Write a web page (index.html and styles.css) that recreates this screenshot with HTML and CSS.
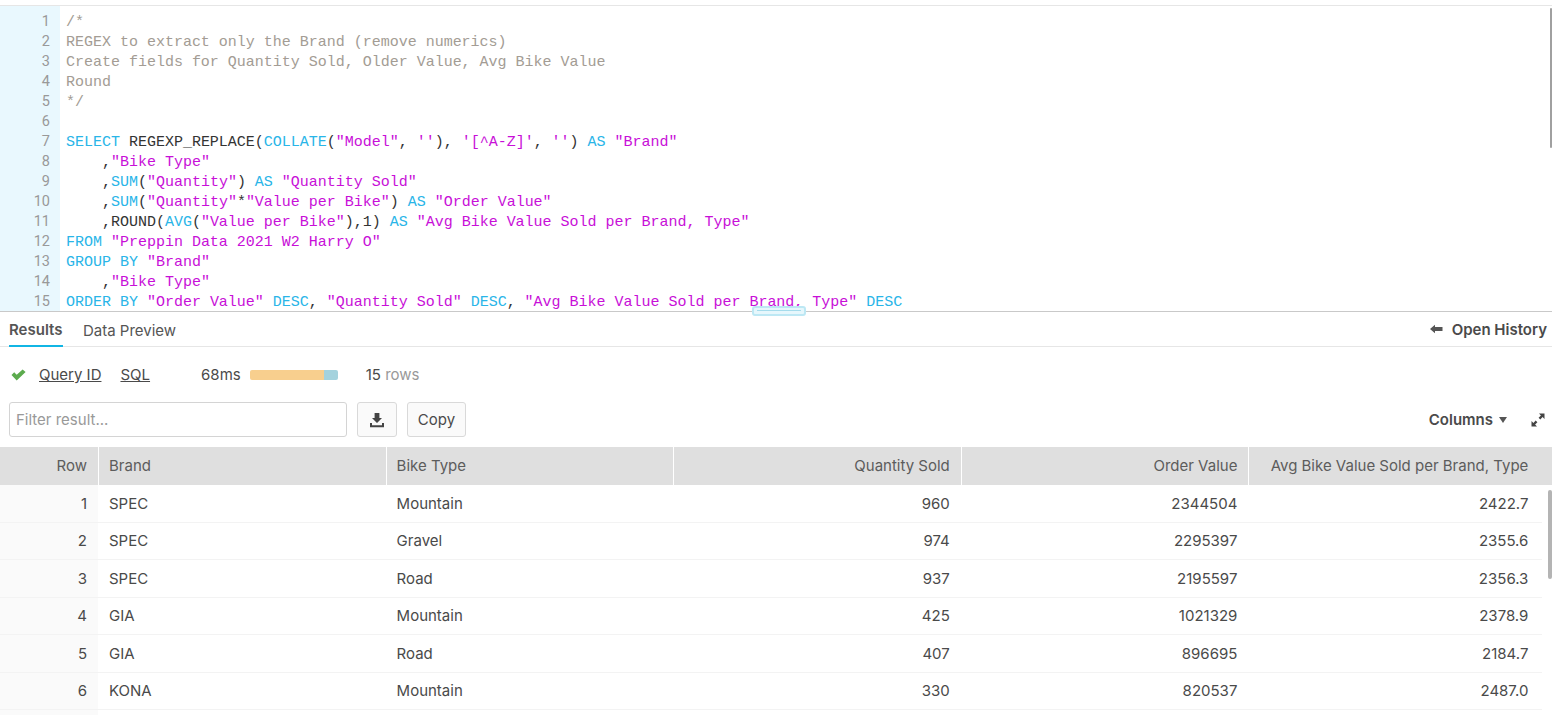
FILE: index.html
```html
<!DOCTYPE html>
<html lang="en">
<head>
<meta charset="utf-8">
<title>Worksheet</title>
<link rel="stylesheet" href="styles.css">
</head>
<body>
<div class="app">
  <section class="editor">
    <div class="gutter">
      <span>1</span><span>2</span><span>3</span><span>4</span><span>5</span><span>6</span><span>7</span><span>8</span><span>9</span><span>10</span><span>11</span><span>12</span><span>13</span><span>14</span><span>15</span>
    </div>
    <pre class="code"><span class="c">/*
REGEX to extract only the Brand (remove numerics)
Create fields for Quantity Sold, Older Value, Avg Bike Value
Round
*/</span>

<span class="k">SELECT</span> REGEXP_REPLACE(<span class="k">COLLATE</span>(<span class="s">"Model"</span>, <span class="s">''</span>), <span class="s">'[^A-Z]'</span>, <span class="s">''</span>) <span class="k">AS</span> <span class="s">"Brand"</span>
    ,<span class="s">"Bike Type"</span>
    ,<span class="k">SUM</span>(<span class="s">"Quantity"</span>) <span class="k">AS</span> <span class="s">"Quantity Sold"</span>
    ,<span class="k">SUM</span>(<span class="s">"Quantity"</span>*<span class="s">"Value per Bike"</span>) <span class="k">AS</span> <span class="s">"Order Value"</span>
    ,ROUND(<span class="k">AVG</span>(<span class="s">"Value per Bike"</span>),1) <span class="k">AS</span> <span class="s">"Avg Bike Value Sold per Brand, Type"</span>
<span class="k">FROM</span> <span class="s">"Preppin Data 2021 W2 Harry O"</span>
<span class="k">GROUP BY</span> <span class="s">"Brand"</span>
    ,<span class="s">"Bike Type"</span>
<span class="k">ORDER BY</span> <span class="s">"Order Value"</span> <span class="k">DESC</span>, <span class="s">"Quantity Sold"</span> <span class="k">DESC</span>, <span class="s">"Avg Bike Value Sold per Brand, Type"</span> <span class="k">DESC</span></pre>
    <div class="scroll scroll-editor"></div>
    <div class="handle"></div>
  </section>

  <nav class="tabs">
    <a class="tab active">Results</a>
    <a class="tab">Data Preview</a>
    <a class="history">
      <svg width="13" height="10" viewBox="0 0 13 10"><path d="M0 5 L5 .8 V3 H12.5 V7 H5 V9.2 Z" fill="#555"/></svg>
      Open History
    </a>
  </nav>

  <div class="status">
    <svg class="check" width="15" height="12" viewBox="0 0 15 12"><path d="M0.5 6 L3.2 3.2 L5.7 5.7 L11.6 0.4 L14.6 3 L5.7 11.4 Z" fill="#5cab4e"/></svg>
    <a class="link">Query ID</a>
    <a class="link sql">SQL</a>
    <span class="time">68ms</span>
    <div class="bar"><i class="bar-a"></i><i class="bar-b"></i></div>
    <span class="rows">15 <em>rows</em></span>
  </div>

  <div class="toolbar">
    <input class="filter" type="text" placeholder="Filter result...">
    <button class="btn icon-btn">
      <svg width="16" height="16" viewBox="0 0 16 16"><path d="M5.6 1 H10.4 V6 H13 L8 11 L3 6 H5.6 Z M1 11 H3 V13.2 H13 V11 H15 V15.2 H1 Z" fill="#444"/></svg>
    </button>
    <button class="btn copy">Copy</button>
    <div class="spacer"></div>
    <a class="columns">Columns <svg width="8" height="6" viewBox="0 0 8 6"><path d="M0 0 H8 L4 6 Z" fill="#555"/></svg></a>
    <svg class="expand" width="14" height="14" viewBox="0 0 14 14"><path d="M8 0.5 H13.5 V6 L11.6 4.1 L9.3 6.4 L7.6 4.7 L9.9 2.4 Z M6 13.5 H0.5 V8 L2.4 9.9 L4.7 7.6 L6.4 9.3 L4.1 11.6 Z" fill="#444"/></svg>
  </div>

  <section class="table">
    <div class="row head">
      <div class="cell num idx">Row</div><div class="cell">Brand</div><div class="cell">Bike Type</div><div class="cell num">Quantity Sold</div><div class="cell num">Order Value</div><div class="cell num">Avg Bike Value Sold per Brand, Type</div>
    </div>
    <div class="row"><div class="cell num idx">1</div><div class="cell">SPEC</div><div class="cell">Mountain</div><div class="cell num">960</div><div class="cell num">2344504</div><div class="cell num">2422.7</div></div>
    <div class="row"><div class="cell num idx">2</div><div class="cell">SPEC</div><div class="cell">Gravel</div><div class="cell num">974</div><div class="cell num">2295397</div><div class="cell num">2355.6</div></div>
    <div class="row"><div class="cell num idx">3</div><div class="cell">SPEC</div><div class="cell">Road</div><div class="cell num">937</div><div class="cell num">2195597</div><div class="cell num">2356.3</div></div>
    <div class="row"><div class="cell num idx">4</div><div class="cell">GIA</div><div class="cell">Mountain</div><div class="cell num">425</div><div class="cell num">1021329</div><div class="cell num">2378.9</div></div>
    <div class="row"><div class="cell num idx">5</div><div class="cell">GIA</div><div class="cell">Road</div><div class="cell num">407</div><div class="cell num">896695</div><div class="cell num">2184.7</div></div>
    <div class="row"><div class="cell num idx">6</div><div class="cell">KONA</div><div class="cell">Mountain</div><div class="cell num">330</div><div class="cell num">820537</div><div class="cell num">2487.0</div></div>
    <div class="row"><div class="cell num idx"></div><div class="cell"></div><div class="cell"></div><div class="cell num"></div><div class="cell num"></div><div class="cell num"></div></div>
    <div class="scroll scroll-table"></div>
  </section>
</div>
</body>
</html>
```
FILE: styles.css
```css
* { box-sizing: border-box; }
html, body { margin: 0; height: 715px; overflow: hidden; background: #fff; }
body { font-family: Inter, "Liberation Sans", sans-serif; font-size: 15px; color: #4a4a4a; }
.app { display: flex; flex-direction: column; height: 715px; overflow: hidden; }

.editor { position: relative; display: flex; flex: none; height: 307px; margin-top: 5px; border-top: 1px solid #e6e6e6; border-bottom: 1px solid #c9c9c9; }
.gutter { flex: none; width: 60px; padding: 6px 10px 0 0; background: #e9f8fe; display: flex; flex-direction: column; align-items: flex-end; font-family: Roboto, sans-serif; font-size: 14.5px; line-height: 20px; color: #999; overflow: hidden; }
.gutter span { height: 20px; flex: none; }
.code { margin: 0; padding: 7px 0 0 6px; font-family: "Liberation Mono", monospace; font-size: 15px; letter-spacing: -0.01px; line-height: 20px; color: #333; overflow: hidden; flex: 1; }
.c { color: #a39c94; }
.k { color: #29b5e8; }
.s { color: #c80fd8; }

.scroll { position: absolute; background: #a0a0a0; border-radius: 2px; }
.scroll-editor { right: 0; top: 2px; width: 2px; height: 140px; }
.scroll-table { right: 0; top: 43px; width: 4px; height: 89px; background: #b4b4b4; }
.handle { position: absolute; left: 752px; top: 300px; width: 54px; height: 10px; background: #e6f7fc; border: 2px solid #bde8f4; border-radius: 3px; }
.handle::after { content: ""; display: block; height: 1px; margin: 2px 3px 0; background: #a5dcec; }

.tabs { flex: none; display: flex; align-items: stretch; height: 35px; padding: 0 5px 0 9px; border-bottom: 1px solid #e6e6e6; }
.tab { display: flex; align-items: center; margin-right: 20px; margin-bottom: -1px; padding-top: 2px; color: #555; }
.tab.active { min-width: 54px; font-weight: 600; border-bottom: 2px solid #11b5e4; }
.history { margin-left: auto; display: flex; align-items: center; gap: 9px; font-weight: 600; color: #4a4a4a; }

.status { flex: none; display: flex; align-items: center; height: 55px; padding-left: 11px; }
.check { margin-right: 13px; }
.link { color: #4a4a4a; text-decoration: underline; }
.sql { margin-left: 19px; }
.time { margin-left: 51px; }
.bar { display: flex; width: 88px; height: 10px; margin-left: 9px; border-radius: 2px; overflow: hidden; }
.bar i { display: block; height: 100%; }
.bar-a { width: 74px; background: #f8cf8e; }
.bar-b { flex: 1; background: #a4d2dd; }
.rows { margin-left: 28px; }
.rows em { font-style: normal; color: #999; }

.toolbar { flex: none; display: flex; align-items: center; height: 35px; padding: 0 7px 0 9px; }
.filter { width: 338px; height: 35px; padding: 0 6px; border: 1px solid #d4d4d4; border-radius: 3px; font: inherit; color: #4a4a4a; background: #fff; outline: none; }
.filter::placeholder { color: #999; opacity: 1; }
.btn { height: 35px; border: 1px solid #d9d9d9; border-radius: 3px; background: #fafafa; font: inherit; color: #4a4a4a; padding: 0; display: flex; align-items: center; justify-content: center; }
.icon-btn { width: 40px; margin-left: 10px; }
.copy { width: 59px; margin-left: 10px; }
.spacer { flex: 1; }
.columns { display: flex; align-items: center; gap: 6px; font-weight: 600; color: #4a4a4a; }
.expand { margin-left: 24px; }

.table { position: relative; flex: none; margin-top: 10px; }
.row { display: grid; grid-template-columns: 98px repeat(4, 287.6px) 291px; height: 37.5px; width: 1542px; border-bottom: 1px solid #f3f3f3; }
.cell { display: flex; align-items: center; padding: 0 10px; white-space: nowrap; color: #4a4a4a; border-left: 1px solid transparent; }
.cell.num { justify-content: flex-end; padding-right: 11px; }
.idx { background: #fafafa; border-left: 0; }
.head { width: 1552px; height: 38px; background: #dfdfdf; border-bottom: 0; }
.head .cell { padding-bottom: 2px; color: #5c5c5c; border-left: 1px solid #fff; }
.head .idx { background: transparent; border-left: 0; }
```
